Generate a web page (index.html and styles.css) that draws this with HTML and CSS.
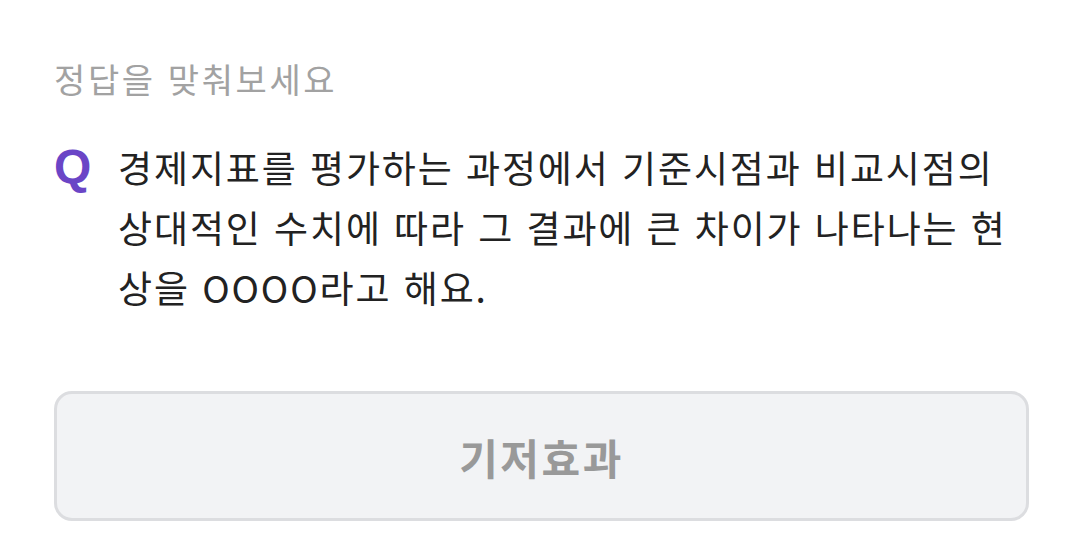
FILE: index.html
```html
<!DOCTYPE html>
<html lang="ko">
<head>
<meta charset="utf-8">
<link rel="stylesheet" href="styles.css">
</head>
<body>
<main class="quiz">
  <p class="prompt">정답을 맞춰보세요</p>
  <div class="question">
    <span class="q-mark">Q</span>
    <p class="q-text">경제지표를 평가하는 과정에서 기준시점과 비교시점의 상대적인 수치에 따라 그 결과에 큰 차이가 나타나는 현상을 OOOO라고 해요.</p>
  </div>
  <div class="answer">기저효과</div>
</main>
</body>
</html>
```
FILE: styles.css
```css
html, body {
  margin: 0;
  padding: 0;
  background: #ffffff;
}
body {
  font-family: "Noto Sans CJK KR", "Noto Sans", sans-serif;
}
.quiz {
  padding: 55px 52px 0 54px;
  display: flex;
  flex-direction: column;
}
.prompt {
  margin: 0;
  font-size: 34px;
  line-height: 48px;
  color: #a2a2a2;
  letter-spacing: 2.6px;
}
.question {
  display: flex;
  margin-top: 34px;
}
.q-mark {
  font-family: "Liberation Sans", Arial, sans-serif;
  font-weight: 700;
  font-size: 48px;
  line-height: 60px;
  color: #6a45c6;
  width: 64px;
  flex: none;
}
.q-text {
  margin: 0;
  font-size: 37px;
  line-height: 60px;
  color: #222222;
  letter-spacing: 1.9px;
  width: 905px;
}
.answer {
  margin-top: 74px;
  height: 130px;
  box-sizing: border-box;
  width: 975px;
  border: 3px solid #dcdde0;
  border-radius: 18px;
  background: #f2f3f5;
  display: flex;
  align-items: center;
  justify-content: center;
  font-size: 42px;
  font-weight: 700;
  color: #999999;
  letter-spacing: 2.5px;
}
```
